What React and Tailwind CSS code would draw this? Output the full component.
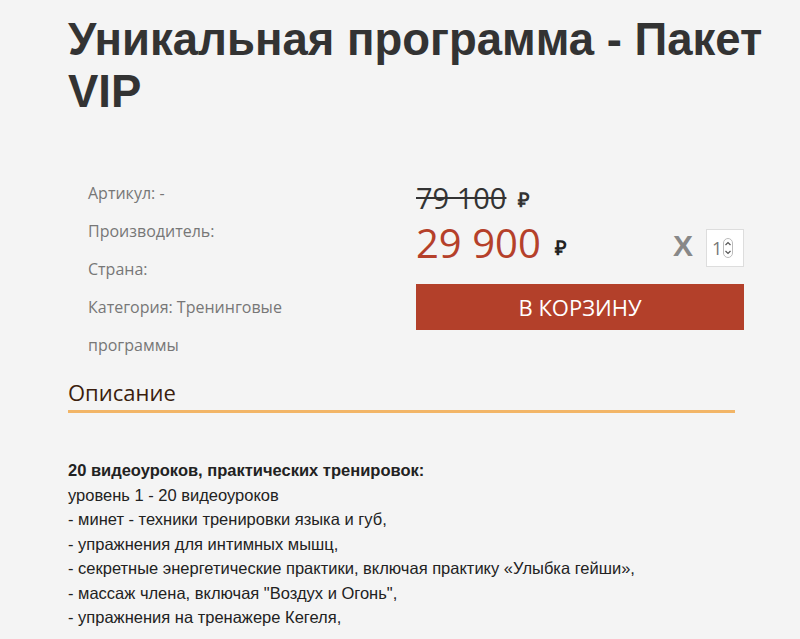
export default function App() {
  const lines = [
    "уровень 1 - 20 видеоуроков",
    "- минет - техники тренировки языка и губ,",
    "- упражнения для интимных мышц,",
    "- секретные энергетические практики, включая практику «Улыбка гейши»,",
    "- массаж члена, включая \"Воздух и Огонь\",",
    "- упражнения на тренажере Кегеля,",
  ];
  return (
    <div className="w-[800px] h-[639px] overflow-hidden bg-[#f4f4f4] pl-[68px]">
      <h1 className="w-[710px] pt-[14px] text-[45.5px] leading-[52px] font-bold text-[#333] [font-family:'Liberation_Sans',Arial,sans-serif]">
        Уникальная программа - Пакет VIP
      </h1>
      <div className="mt-[56px] flex [font-family:'Open_Sans',sans-serif]">
        <div className="w-[348px] pl-[20px] text-[16px] leading-[38px] text-[#777]">
          <div>Артикул: -</div>
          <div>Производитель:</div>
          <div>Страна:</div>
          <div className="w-[240px]">Категория: Тренинговые программы</div>
        </div>
        <div className="w-[328px] pt-[6px]">
          <div className="flex items-center text-[#333] h-[36px]">
            <span className="text-[29px] leading-[36px] line-through">79 100</span>
            <span className="ml-[12px] mt-[4px] text-[20px] font-bold">₽</span>
          </div>
          <div className="flex items-center h-[54px]">
            <div className="flex items-center">
              <span className="text-[40px] leading-[54px] text-[#b5402a]">29 900</span>
              <span className="ml-[14px] mt-[10px] text-[20px] font-bold text-[#222]">₽</span>
            </div>
            <span className="ml-auto mt-[4px] text-[30px] font-bold text-[#888] [font-family:'Liberation_Sans',Arial,sans-serif]">X</span>
            <div className="ml-[13px] mt-[10px] w-[38px] h-[38px] bg-white border border-[#ddd] flex items-center pl-[5px] text-[18px] text-[#777]">
              1
              <svg width="10" height="20" viewBox="0 0 10 20" className="ml-[1px]">
                <rect x="0.5" y="0.5" width="9" height="19" rx="4.5" fill="#fff" stroke="#bbb" />
                <path d="M2.5 7 L5 4.5 L7.5 7" fill="none" stroke="#555" strokeWidth="1.2" />
                <path d="M2.5 13 L5 15.5 L7.5 13" fill="none" stroke="#555" strokeWidth="1.2" />
              </svg>
            </div>
          </div>
          <button className="mt-[14px] w-[328px] h-[46px] bg-[#b3402a] text-white text-[22px] flex items-center justify-center">
            В КОРЗИНУ
          </button>
        </div>
      </div>
      <div className="mt-[13px] w-[667px] [font-family:'Open_Sans',sans-serif]">
        <div className="text-[22px] leading-[30px] text-[#3b1e0e]">Описание</div>
        <div className="mt-[3px] h-[3px] bg-[#f2b567]"></div>
      </div>
      <div className="mt-[45px] text-[16.5px] leading-[24.5px] text-[#222] [font-family:'Liberation_Sans',Arial,sans-serif]">
        <div className="font-bold">20 видеоуроков, практических тренировок:</div>
        {lines.map((l) => (
          <div key={l}>{l}</div>
        ))}
      </div>
    </div>
  );
}
